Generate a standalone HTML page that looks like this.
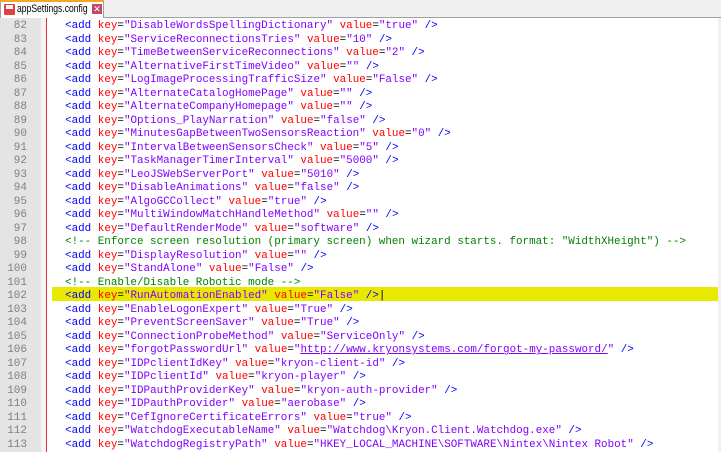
<!DOCTYPE html>
<html><head><meta charset="utf-8"><style>
*{margin:0;padding:0;box-sizing:border-box}
body{width:721px;height:452px;overflow:hidden;background:#fff;position:relative;font-family:"Liberation Mono",monospace}
#tabbar{position:absolute;left:0;top:0;width:721px;height:18px;background:#f0f0f0;border-bottom:1px solid #a0a0a0}
#tab{position:absolute;left:0;top:0;width:104px;height:18px;background:#fff;border:1px solid #a0a0a0;border-bottom:none;border-top:2px solid #f5a623;color:#000;white-space:nowrap}
#tt{position:absolute;left:16px;top:1px;font:11px "Liberation Sans",sans-serif;line-height:13px;transform:scaleX(0.78);transform-origin:0 0}
#save{position:absolute;left:3px;top:2px;width:11px;height:11px;background:#e04040;border-radius:1px}
#save:after{content:"";position:absolute;left:2px;top:1px;width:7px;height:4px;background:#fff}
#cls{position:absolute;left:91px;top:2px;width:10px;height:10px;background:#c04a6a;color:#fff;font:9px "Liberation Sans",sans-serif;line-height:10px;text-align:center}
#gut{position:absolute;left:0;top:18px;width:41px;height:434px;background:#e4e4e4}
#fold{position:absolute;left:41px;top:18px;width:6px;height:434px;background:#f4f4f4;border-right:1px solid #e03030}
#nums{position:absolute;left:0;top:20px;width:27px;text-align:right;color:#808080;font-size:11px;line-height:13.52px}
#hl{position:absolute;left:52px;top:287px;width:669px;height:14px;background:#e8e800}
#code{position:absolute;left:52px;top:20px;font-size:10.9px;line-height:13.52px;white-space:pre;color:#000}
.t{color:#0000ff}.k{color:#ff0000}.v{color:#8000ff}.c{color:#008000}
.u{text-decoration:underline}
#rb{position:absolute;left:718px;top:18px;width:3px;height:434px;background:#f0f0f0}
</style></head><body>
<div id="tabbar"><div id="tab"><div id="save"></div><span id="tt">appSettings.config</span><div id="cls">✕</div></div></div>
<div id="gut"></div><div id="fold"></div>
<div id="nums">82<br>83<br>84<br>85<br>86<br>87<br>88<br>89<br>90<br>91<br>92<br>93<br>94<br>95<br>96<br>97<br>98<br>99<br>100<br>101<br>102<br>103<br>104<br>105<br>106<br>107<br>108<br>109<br>110<br>111<br>112<br>113</div>
<div id="hl"></div>
<div id="code">  <span class="t">&lt;add</span> <span class="k">key</span>=<span class="v">"DisableWordsSpellingDictionary"</span> <span class="k">value</span>=<span class="v">"true"</span> <span class="t">/&gt;</span>
  <span class="t">&lt;add</span> <span class="k">key</span>=<span class="v">"ServiceReconnectionsTries"</span> <span class="k">value</span>=<span class="v">"10"</span> <span class="t">/&gt;</span>
  <span class="t">&lt;add</span> <span class="k">key</span>=<span class="v">"TimeBetweenServiceReconnections"</span> <span class="k">value</span>=<span class="v">"2"</span> <span class="t">/&gt;</span>
  <span class="t">&lt;add</span> <span class="k">key</span>=<span class="v">"AlternativeFirstTimeVideo"</span> <span class="k">value</span>=<span class="v">""</span> <span class="t">/&gt;</span>
  <span class="t">&lt;add</span> <span class="k">key</span>=<span class="v">"LogImageProcessingTrafficSize"</span> <span class="k">value</span>=<span class="v">"False"</span> <span class="t">/&gt;</span>
  <span class="t">&lt;add</span> <span class="k">key</span>=<span class="v">"AlternateCatalogHomePage"</span> <span class="k">value</span>=<span class="v">""</span> <span class="t">/&gt;</span>
  <span class="t">&lt;add</span> <span class="k">key</span>=<span class="v">"AlternateCompanyHomepage"</span> <span class="k">value</span>=<span class="v">""</span> <span class="t">/&gt;</span>
  <span class="t">&lt;add</span> <span class="k">key</span>=<span class="v">"Options_PlayNarration"</span> <span class="k">value</span>=<span class="v">"false"</span> <span class="t">/&gt;</span>
  <span class="t">&lt;add</span> <span class="k">key</span>=<span class="v">"MinutesGapBetweenTwoSensorsReaction"</span> <span class="k">value</span>=<span class="v">"0"</span> <span class="t">/&gt;</span>
  <span class="t">&lt;add</span> <span class="k">key</span>=<span class="v">"IntervalBetweenSensorsCheck"</span> <span class="k">value</span>=<span class="v">"5"</span> <span class="t">/&gt;</span>
  <span class="t">&lt;add</span> <span class="k">key</span>=<span class="v">"TaskManagerTimerInterval"</span> <span class="k">value</span>=<span class="v">"5000"</span> <span class="t">/&gt;</span>
  <span class="t">&lt;add</span> <span class="k">key</span>=<span class="v">"LeoJSWebServerPort"</span> <span class="k">value</span>=<span class="v">"5010"</span> <span class="t">/&gt;</span>
  <span class="t">&lt;add</span> <span class="k">key</span>=<span class="v">"DisableAnimations"</span> <span class="k">value</span>=<span class="v">"false"</span> <span class="t">/&gt;</span>
  <span class="t">&lt;add</span> <span class="k">key</span>=<span class="v">"AlgoGCCollect"</span> <span class="k">value</span>=<span class="v">"true"</span> <span class="t">/&gt;</span>
  <span class="t">&lt;add</span> <span class="k">key</span>=<span class="v">"MultiWindowMatchHandleMethod"</span> <span class="k">value</span>=<span class="v">""</span> <span class="t">/&gt;</span>
  <span class="t">&lt;add</span> <span class="k">key</span>=<span class="v">"DefaultRenderMode"</span> <span class="k">value</span>=<span class="v">"software"</span> <span class="t">/&gt;</span>
  <span class="c">&lt;!-- Enforce screen resolution (primary screen) when wizard starts. format: "WidthXHeight") --&gt;</span>
  <span class="t">&lt;add</span> <span class="k">key</span>=<span class="v">"DisplayResolution"</span> <span class="k">value</span>=<span class="v">""</span> <span class="t">/&gt;</span>
  <span class="t">&lt;add</span> <span class="k">key</span>=<span class="v">"StandAlone"</span> <span class="k">value</span>=<span class="v">"False"</span> <span class="t">/&gt;</span>
  <span class="c">&lt;!-- Enable/Disable Robotic mode --&gt;</span>
  <span class="t">&lt;add</span> <span class="k">key</span>=<span class="v">"RunAutomationEnabled"</span> <span class="k">value</span>=<span class="v">"False"</span> <span class="t">/&gt;</span>|
  <span class="t">&lt;add</span> <span class="k">key</span>=<span class="v">"EnableLogonExpert"</span> <span class="k">value</span>=<span class="v">"True"</span> <span class="t">/&gt;</span>
  <span class="t">&lt;add</span> <span class="k">key</span>=<span class="v">"PreventScreenSaver"</span> <span class="k">value</span>=<span class="v">"True"</span> <span class="t">/&gt;</span>
  <span class="t">&lt;add</span> <span class="k">key</span>=<span class="v">"ConnectionProbeMethod"</span> <span class="k">value</span>=<span class="v">"ServiceOnly"</span> <span class="t">/&gt;</span>
  <span class="t">&lt;add</span> <span class="k">key</span>=<span class="v">"forgotPasswordUrl"</span> <span class="k">value</span>=<span class="v">"<span class="u">http://www.kryonsystems.com/forgot-my-password/</span>"</span> <span class="t">/&gt;</span>
  <span class="t">&lt;add</span> <span class="k">key</span>=<span class="v">"IDPclientIdKey"</span> <span class="k">value</span>=<span class="v">"kryon-client-id"</span> <span class="t">/&gt;</span>
  <span class="t">&lt;add</span> <span class="k">key</span>=<span class="v">"IDPclientId"</span> <span class="k">value</span>=<span class="v">"kryon-player"</span> <span class="t">/&gt;</span>
  <span class="t">&lt;add</span> <span class="k">key</span>=<span class="v">"IDPauthProviderKey"</span> <span class="k">value</span>=<span class="v">"kryon-auth-provider"</span> <span class="t">/&gt;</span>
  <span class="t">&lt;add</span> <span class="k">key</span>=<span class="v">"IDPauthProvider"</span> <span class="k">value</span>=<span class="v">"aerobase"</span> <span class="t">/&gt;</span>
  <span class="t">&lt;add</span> <span class="k">key</span>=<span class="v">"CefIgnoreCertificateErrors"</span> <span class="k">value</span>=<span class="v">"true"</span> <span class="t">/&gt;</span>
  <span class="t">&lt;add</span> <span class="k">key</span>=<span class="v">"WatchdogExecutableName"</span> <span class="k">value</span>=<span class="v">"Watchdog\Kryon.Client.Watchdog.exe"</span> <span class="t">/&gt;</span>
  <span class="t">&lt;add</span> <span class="k">key</span>=<span class="v">"WatchdogRegistryPath"</span> <span class="k">value</span>=<span class="v">"HKEY_LOCAL_MACHINE\SOFTWARE\Nintex\Nintex Robot"</span> <span class="t">/&gt;</span></div>
<div id="rb"></div>
</body></html>
